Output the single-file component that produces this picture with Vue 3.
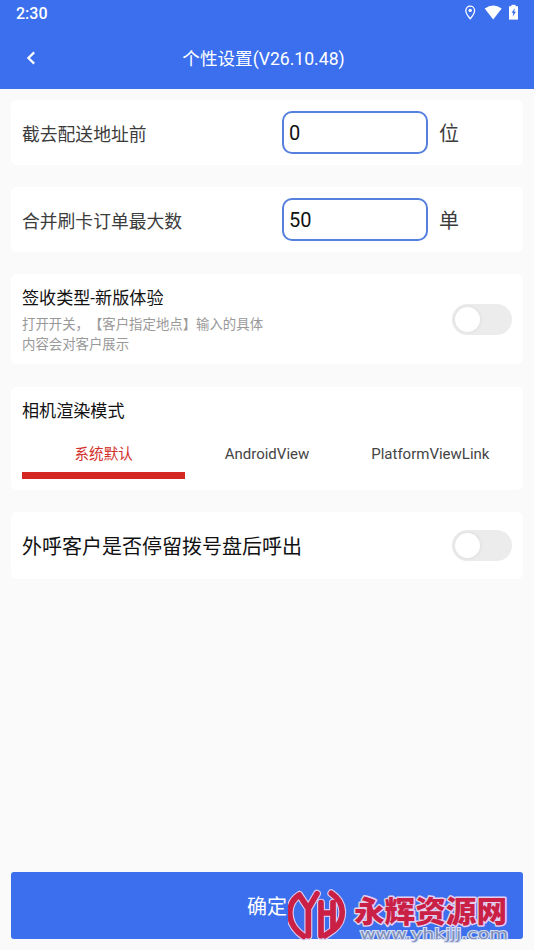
<script setup>
import { ref } from 'vue'

const fields = ref([
  { label: '截去配送地址前', value: '0', unit: '位' },
  { label: '合并刷卡订单最大数', value: '50', unit: '单' },
])
const modes = ['系统默认', 'AndroidView', 'PlatformViewLink']
const mode = ref(0)
const newSign = ref(false)
const keepDial = ref(false)
</script>

<template>
  <div class="page">
    <header class="header">
      <div class="status">
        <span class="time">2:30</span>
        <svg class="status-icons" viewBox="0 0 56 18" width="56" height="18">
          <path d="M6.2 2.1a4.4 4.4 0 0 0-4.4 4.4c0 3.3 4.4 8.2 4.4 8.2s4.4-4.9 4.4-8.2a4.4 4.4 0 0 0-4.4-4.4z" fill="none" stroke="#fff" stroke-width="1.3" />
          <circle cx="6.2" cy="6.4" r="1.7" fill="#fff" />
          <path d="M20.7 4.6Q29.2-1.5 37.7 4.6L29.2 15.6z" fill="#fff" />
          <path d="M45 2.2h9v13.4h-9z" fill="#fff" />
          <path d="M47.4.8h4.2v2h-4.2z" fill="#fff" />
          <path d="M50.8 4.2l-3.3 4.6h1.7l-.5 3.6 3.3-4.7h-1.8z" fill="#3b6fee" />
        </svg>
      </div>
      <div class="nav">
        <svg class="back" viewBox="0 0 12 16" width="12" height="16">
          <path d="M9.2 2.4L3.4 8l5.8 5.6" fill="none" stroke="#fff" stroke-width="2.2" />
        </svg>
        <h1 class="title">个性设置(V26.10.48)</h1>
      </div>
    </header>

    <main class="content">
      <section v-for="f in fields" :key="f.label" class="card field">
        <label class="label">{{ f.label }}</label>
        <input v-model="f.value" class="box" />
        <span class="unit">{{ f.unit }}</span>
      </section>

      <section class="card sign">
        <div class="sign-text">
          <div class="card-title">签收类型-新版体验</div>
          <div class="hint">打开开关，【客户指定地点】输入的具体<br />内容会对客户展示</div>
        </div>
        <button class="switch" :class="{ on: newSign }" @click="newSign = !newSign"><i class="knob"></i></button>
      </section>

      <section class="card camera">
        <div class="card-title">相机渲染模式</div>
        <div class="tabs">
          <div v-for="(m, i) in modes" :key="m" class="tab" :class="{ active: i === mode }" @click="mode = i">{{ m }}</div>
        </div>
      </section>

      <section class="card dial">
        <div class="dial-label">外呼客户是否停留拨号盘后呼出</div>
        <button class="switch" :class="{ on: keepDial }" @click="keepDial = !keepDial"><i class="knob"></i></button>
      </section>
    </main>

    <footer class="footer">
      <button class="confirm">确定</button>
      <svg class="mark" viewBox="0 0 250 70" width="250" height="70">
        <g transform="translate(-58 -20) scale(.33333)" fill="none" stroke-linejoin="round">
          <g v-for="layer in ['halo', 'ink']" :key="layer" :class="layer">
            <path d="M208 105C172 128 168 181 206 217L221 229M208 105L235 146M261 101L235 146V227" />
            <path d="M273 128V227M273 159H309M309 128V204M304 100C347 128 346 181 311 209L285 227" />
          </g>
        </g>
        <text class="brand" x="66" y="41.5" textLength="153" lengthAdjust="spacingAndGlyphs">永辉资源网</text>
        <text class="url" x="72" y="58.5" textLength="148" lengthAdjust="spacingAndGlyphs">www.yhkjjj.com</text>
      </svg>
    </footer>
  </div>
</template>

<style>
body {
  margin: 0;
  background: #fafafa;
}
</style>

<style scoped>
.page {
  box-sizing: border-box;
  width: 534px;
  height: 950px;
  display: flex;
  flex-direction: column;
  background: #fafafa;
  font-family: Roboto, 'Noto Sans CJK SC', sans-serif;
  text-spacing-trim: space-all;
  color: #111;
  overflow: hidden;
}
.header {
  height: 89px;
  background: #3b6fee;
  color: #fff;
}
.status {
  height: 28px;
  padding: 0 12px 0 16px;
  display: flex;
  align-items: center;
  justify-content: space-between;
}
.time {
  font-size: 16px;
  font-weight: 500;
  line-height: 28px;
}
.status-icons {
  margin-top: -2px;
  margin-right: 2px;
}
.nav {
  height: 61px;
  display: grid;
  grid-template-columns: 60px 1fr 67px;
  align-items: center;
}
.back {
  margin-left: 25px;
  margin-top: -2px;
}
.title {
  margin: 0;
  font-size: 17.6px;
  font-weight: 400;
  line-height: 26px;
  text-align: center;
}
.content {
  flex: 1;
  padding: 11px 11px 0;
  display: flex;
  flex-direction: column;
  gap: 22px;
}
.card {
  box-sizing: border-box;
  background: #fff;
  border-radius: 6px;
  padding: 0 11px;
}
.field {
  height: 65px;
  display: grid;
  grid-template-columns: 260px 146px 1fr;
  align-items: center;
}
.label {
  font-size: 17.8px;
  color: #3c3c3c;
  line-height: 26px;
  padding-top: 4px;
}
.box {
  box-sizing: border-box;
  width: 146px;
  height: 43px;
  margin: 0;
  padding: 1px 5px 0;
  border: 2px solid #5580de;
  border-radius: 10px;
  background: #fff;
  outline: none;
  font: 20px Roboto, sans-serif;
  color: #111;
}
.unit {
  padding-left: 11px;
  padding-top: 2px;
  font-size: 20px;
  line-height: 28px;
  color: #3c3c3c;
}
.sign {
  height: 90px;
  padding-top: 1px;
  display: flex;
  justify-content: space-between;
  align-items: center;
}
.sign-text {
  padding-top: 1px;
}
.card-title {
  font-size: 17.1px;
  line-height: 26px;
}
.hint {
  margin-top: 4px;
  font-size: 13.4px;
  line-height: 20px;
  color: #999;
}
.switch {
  width: 60px;
  height: 31px;
  padding: 3px;
  border: 0;
  border-radius: 16px;
  background: #ececec;
  display: flex;
}
.switch.on {
  justify-content: flex-end;
  background: #3b6fee;
}
.knob {
  width: 25px;
  height: 25px;
  border-radius: 50%;
  background: #fff;
  box-shadow: 0 0 5px rgba(0, 0, 0, 0.08);
}
.camera {
  height: 103px;
  margin-top: 1px;
  padding-top: 11px;
}
.tabs {
  margin-top: 12px;
  display: grid;
  grid-template-columns: repeat(3, 1fr);
}
.tab {
  height: 43px;
  font-size: 15px;
  line-height: 36px;
  text-align: center;
  color: #444;
}
.tab.active {
  font-size: 14.6px;
  color: #d32f2b;
  box-shadow: inset 0 -7px #d42722;
}
.dial {
  height: 67px;
  display: flex;
  justify-content: space-between;
  align-items: center;
}
.dial-label {
  padding-top: 2px;
  font-size: 20px;
  line-height: 30px;
}
.footer {
  position: relative;
  padding: 0 11px 11px;
}
.confirm {
  display: block;
  width: 100%;
  height: 67px;
  padding: 0;
  border: 0;
  border-radius: 3px;
  background: #3b6fee;
  color: #fff;
  font: 20px Roboto, 'Noto Sans CJK SC', sans-serif;
}
.mark {
  position: absolute;
  left: 288px;
  bottom: 0;
}
.halo {
  stroke: #d9c9ee;
  stroke-width: 24;
  stroke-linecap: round;
}
.ink {
  stroke: #cb2045;
  stroke-width: 17;
  stroke-linecap: round;
}
.brand {
  font: 900 29.5px 'Noto Sans CJK SC', sans-serif;
  fill: #cb2045;
  stroke: #e2cfee;
  stroke-width: 3px;
  paint-order: stroke;
  stroke-linejoin: round;
}
.url {
  font: 14px 'DejaVu Sans', sans-serif;
  fill: #7f8fb8;
  stroke: #d3dbf3;
  stroke-width: 2px;
  paint-order: stroke;
}
</style>
